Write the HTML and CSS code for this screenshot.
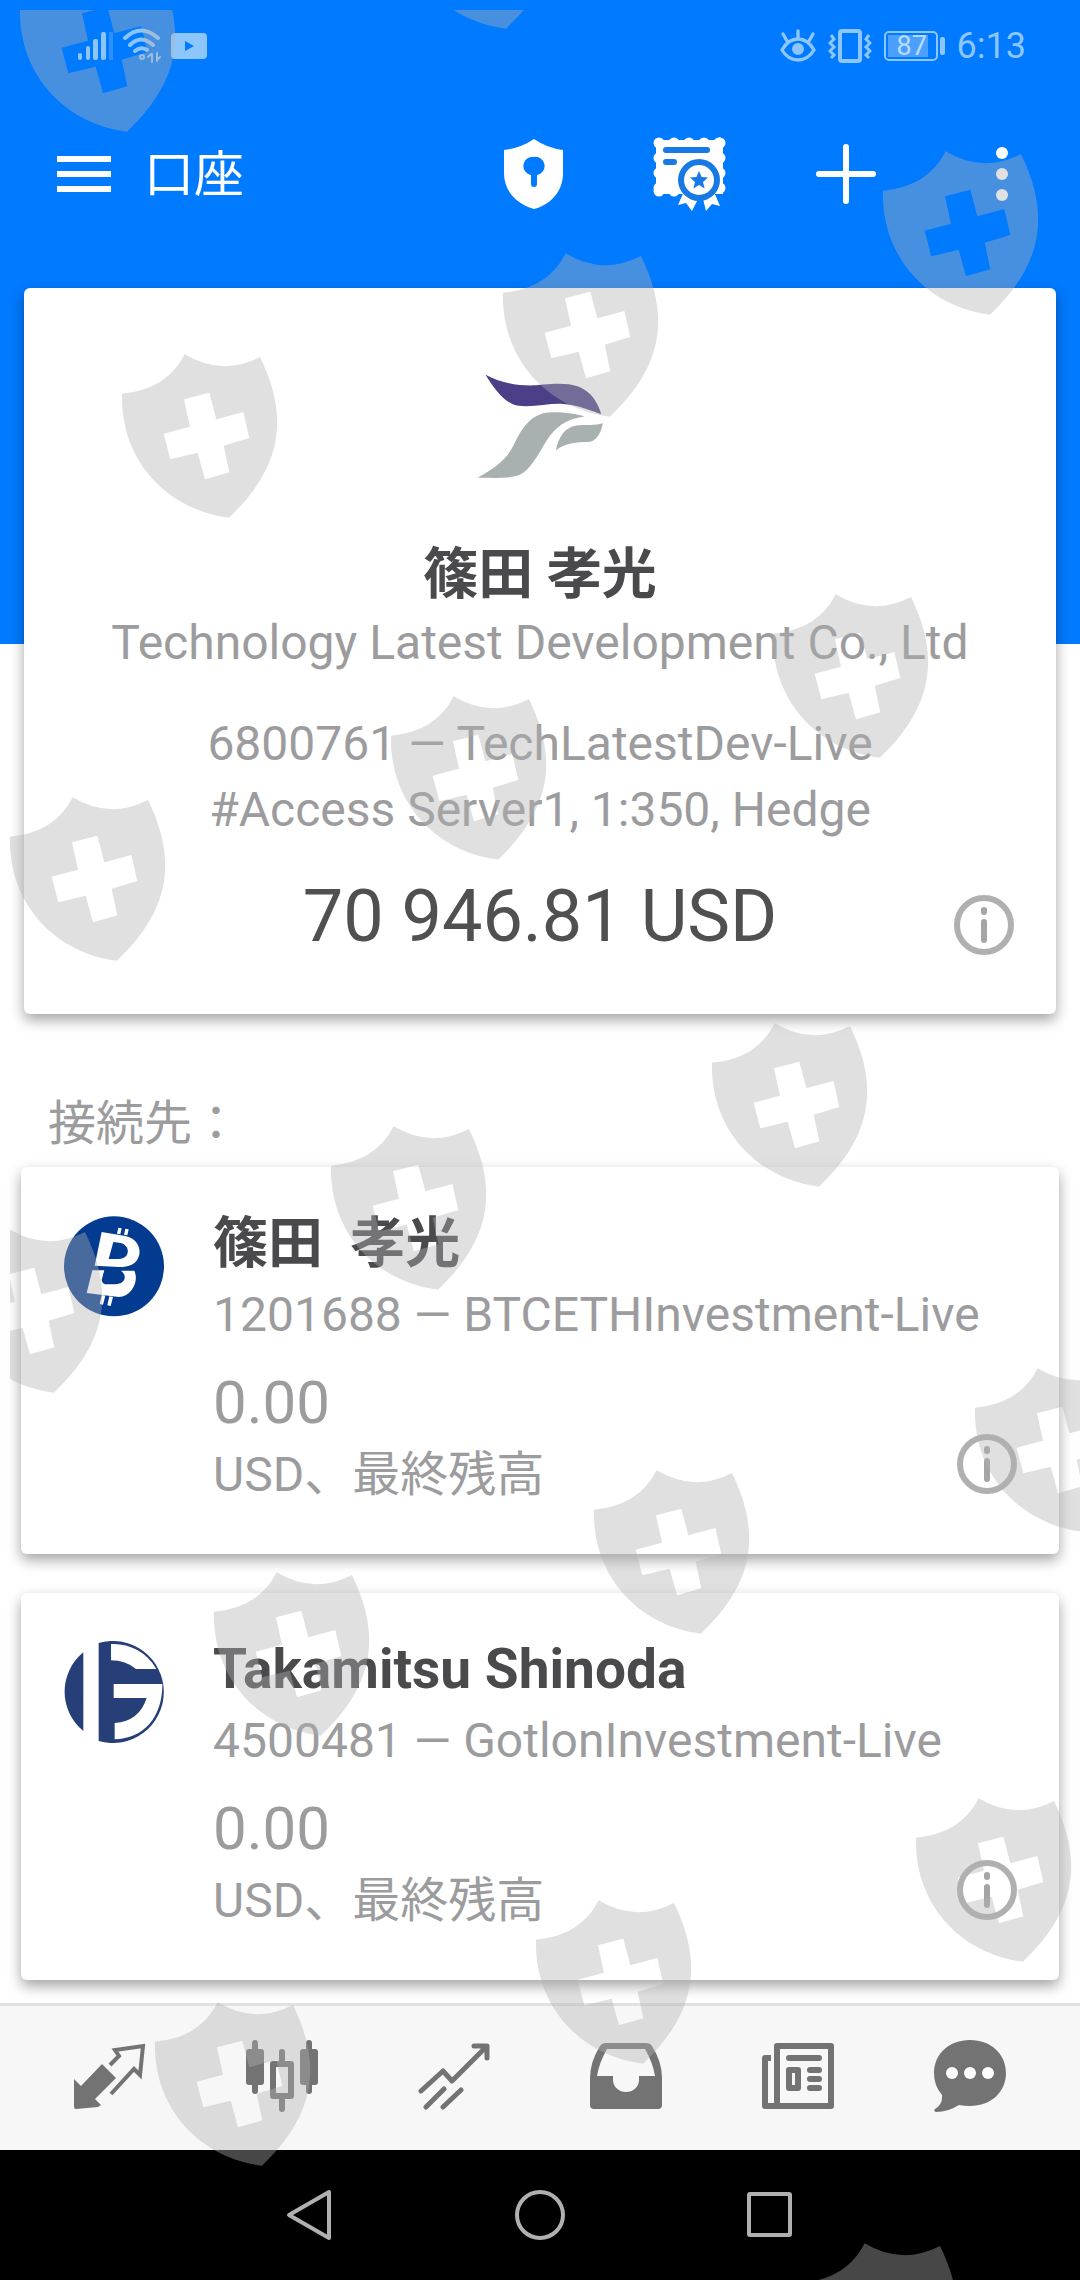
FILE: index.html
```html
<!DOCTYPE html>
<html lang="ja">
<head>
<meta charset="utf-8">
<meta name="viewport" content="width=device-width, initial-scale=1">
<title>口座</title>
<link rel="stylesheet" href="styles.css">
</head>
<body>
<header class="header">
  <div class="status">
    <div class="status-group status-left">
      <svg width="28" height="30" viewBox="0 0 28 30" fill="currentColor"><rect x="0" y="22" width="4" height="7" rx="2"/><rect x="8" y="15" width="4" height="14" rx="2"/><rect x="15" y="8" width="5" height="21" rx="2"/><rect x="23" y="1" width="5" height="28" rx="2"/></svg>
      <span class="no-sim"></span>
      <svg width="40" height="36" viewBox="0 0 40 36" fill="none" stroke="currentColor" stroke-width="4" stroke-linecap="round"><path d="M3 10Q19-5 36 10M8 17Q19 6 31 17M13 23Q19 18 25 22"/><circle cx="20" cy="29" r="1"/><path d="M30 26v8M26 29l3-3M35 25v8M38 29l-2 2" stroke-width="2"/></svg>
      <svg width="36" height="26" viewBox="0 0 36 26"><path fill="currentColor" fill-rule="evenodd" d="M4 0H32Q36 0 36 4V22Q36 26 32 26H4Q0 26 0 22V4Q0 0 4 0ZM14 8V18L23 13Z"/></svg>
    </div>
    <div class="status-group status-right">
      <svg width="36" height="34" viewBox="0 0 36 34" fill="none" stroke="currentColor" stroke-width="3.4" stroke-linecap="round"><path d="M2 21Q8 10 18 10T34 21Q28 31 18 31T2 21ZM18 9V2M7 12L3 5M29 12l4-7"/><circle cx="18" cy="20" r="5" fill="currentColor" stroke-width="2"/></svg>
      <svg width="44" height="34" viewBox="0 0 44 34" fill="none" stroke="currentColor" stroke-width="4"><rect x="12" y="2" width="20" height="30" rx="2"/><path d="M3 6l3 4-4 4 4 4-4 4 4 4-3 3M41 6l-3 4 4 4-4 4 4 4-4 4 3 3" stroke-width="3"/></svg>
      <span class="battery"><span class="battery-level">87</span></span>
      <span class="clock">6:13</span>
    </div>
  </div>
  <div class="toolbar">
    <button class="menu" aria-label="メニュー"><svg width="54" height="38" viewBox="0 0 54 38" fill="#fff"><path d="M0 1h54v6H0zM0 16h54v6H0zM0 31h54v6H0z"/></svg></button>
    <h1 class="title">口座</h1>
    <button class="action" aria-label="セキュリティ"><svg width="60" height="70" viewBox="0 0 60 70"><path fill="#fff" fill-rule="evenodd" d="M30 0Q43 9 59 11V34C59 54 45 66 30 70C15 66 0 54 0 34V11Q17 9 30 0ZM30 18A9 9 0 0 0 27 36V45Q27 48 30 48T33 45V36A9 9 0 0 0 30 18Z"/></svg></button>
    <button class="action" aria-label="証明書"><svg width="74" height="74" viewBox="0 0 74 74"><rect x="3" y="3" width="67" height="54" fill="#fff"/><g fill="none" stroke="#fff" stroke-width="11" stroke-linecap="round" stroke-dasharray="0 15"><path d="M6 6H70M67 6V54M6 6V54M6 54H25"/></g><path fill="#fff" d="M33 50L25 68 33 66 39 74 45 62 50 62 53 74 59 67 67 69 59 50Z"/><circle cx="46" cy="43" r="21" fill="#1679e6"/><circle cx="46" cy="43" r="15" fill="#fff"/><path fill="#1679e6" d="M46 34l2.600 6 6.400.6-5 4.400 1.600 6.500-5.600-3.500-5.600 3.500L42 45l-5-4.400 6.400-.6Z"/><path d="M13 13H54M13 25H21" stroke="#1679e6" stroke-width="6" stroke-linecap="round"/></svg></button>
    <button class="action" aria-label="追加"><svg width="60" height="62" viewBox="0 0 60 62" stroke="#fff" stroke-width="6" stroke-linecap="round"><path d="M30 4V58M3 31H57"/></svg></button>
    <button class="action" aria-label="その他"><svg width="12" height="54" viewBox="0 0 12 54" fill="#fff"><circle cx="6" cy="6" r="6"/><circle cx="6" cy="27" r="6"/><circle cx="6" cy="48" r="6"/></svg></button>
  </div>
</header>

<main class="main">
  <section class="card current">
    <svg class="current-logo" width="128" height="105" viewBox="288 400 384 316"><path fill="#4c3f87" d="M316 402C370 430 420 436 470 434C560 424 600 430 632 462C650 482 660 505 664 521C620 505 590 492 550 490C500 488 460 502 410 495C370 485 340 440 316 402Z"/><path fill="#a8b0b0" d="M292 712C350 680 380 655 400 615C430 555 455 515 520 515C560 515 590 520 614 528C560 535 525 560 500 600C470 650 450 690 415 705C385 716 340 712 292 712ZM528 630C535 590 555 560 590 555C620 552 645 555 669 548C665 575 650 603 625 605C590 605 555 608 528 630Z"/></svg>
    <h2 class="name">篠田 孝光</h2>
    <p class="company">Technology Latest Development Co., Ltd</p>
    <p class="details">6800761 — TechLatestDev-Live<br>#Access Server1, 1:350, Hedge</p>
    <div class="balance-row">
      <p class="balance">70 946.81 USD</p>
      <button class="info" aria-label="口座情報"><svg width="60" height="60" viewBox="0 0 60 60" fill="none" stroke="#b0b0b0" stroke-width="6" stroke-linecap="round"><circle cx="30" cy="30" r="27"/><path d="M30 15v2M30 27v18" stroke="#a5a5a5"/></svg></button>
    </div>
  </section>

  <h2 class="section-label">接続先：</h2>
  <ul class="accounts">
    <li class="card account">
      <svg class="account-logo" width="102" height="102" viewBox="27 28 306 306"><circle cx="180" cy="182" r="150" fill="#023b8f"/><path fill="#fff" fill-rule="evenodd" d="M143 79L214 91C250 98 263 130 254 153C247 175 225 184 195 184L122 180ZM178 109L164 160H194C229 159 230 119 200 112ZM193 66l10 2-4 18-10-2ZM214 69l10 2-4 18-10-2ZM115 194H151L143 222Q144 236 160 236H183C217 235 219 208 201 195H241C256 226 233 272 194 274L98 262ZM143 268l11 2-7 27-10-2ZM166 272l11 2-7 27-10-2Z"/></svg>
      <div class="account-text">
        <h3 class="name">篠田&nbsp; 孝光</h3>
        <p>1201688 — BTCETHInvestment-Live</p>
        <p class="amount">0.00</p>
        <p>USD、最終残高</p>
      </div>
      <button class="info" aria-label="口座情報"><svg width="60" height="60" viewBox="0 0 60 60" fill="none" stroke="#b0b0b0" stroke-width="6" stroke-linecap="round"><circle cx="30" cy="30" r="27"/><path d="M30 15v2M30 27v18" stroke="#a5a5a5"/></svg></button>
    </li>
    <li class="card account">
      <svg class="account-logo" width="102" height="102" viewBox="27 28 306 306"><path fill="#263f78" fill-rule="evenodd" d="M88 62V298A152 152 0 0 1 88 62ZM134 34A153 153 0 1 1 134 328ZM171 37V86Q215 86 246 112H307A146 146 0 0 0 171 37ZM179 157V199H278Q256 269 182 274V323C270 322 326 255 325 157Z"/></svg>
      <div class="account-text">
        <h3 class="name">Takamitsu Shinoda</h3>
        <p>4500481 — GotlonInvestment-Live</p>
        <p class="amount">0.00</p>
        <p>USD、最終残高</p>
      </div>
      <button class="info" aria-label="口座情報"><svg width="60" height="60" viewBox="0 0 60 60" fill="none" stroke="#b0b0b0" stroke-width="6" stroke-linecap="round"><circle cx="30" cy="30" r="27"/><path d="M30 15v2M30 27v18" stroke="#a5a5a5"/></svg></button>
    </li>
  </ul>
</main>

<nav class="tabs">
  <a href="#quotes" aria-label="気配値"><svg width="72" height="72" viewBox="0 0 72 72"><path fill="#737373" d="M28 24L42 38 21 59 27 65 24 67 2 69Q0 69 0 67V39L7 46Z"/><path fill="none" stroke="#737373" stroke-width="4" d="M36 25L45 16 41 10 69 6 66 35 60 29 37 54"/></svg></a>
  <a href="#chart" aria-label="チャート"><svg width="72" height="72" viewBox="0 0 72 72" fill="#737373"><rect x="0" y="9" width="18" height="36" rx="3"/><rect x="6" width="6" height="54" rx="3"/><rect x="54" y="9" width="18" height="36" rx="3"/><rect x="60" width="6" height="54" rx="3"/><path fill="none" stroke="#737373" stroke-width="6" stroke-linecap="round" stroke-linejoin="round" d="M27 24H45V56H27ZM36 12V22M36 58V69"/></svg></a>
  <a href="#trade" aria-label="トレード"><svg width="72" height="72" viewBox="0 0 72 72" fill="none" stroke="#737373" stroke-width="5" stroke-linecap="round" stroke-linejoin="round"><path d="M3 51L25 31 34 41 67 8M56 6H69V18M8 67L26 49M25 67L43 50"/></svg></a>
  <a href="#history" aria-label="履歴"><svg width="72" height="72" viewBox="0 0 72 72"><path fill="#737373" fill-rule="evenodd" d="M16 3H56Q60 3 62 6Q72 22 72 38V65Q72 69 68 69H4Q0 69 0 65V38Q0 22 10 6Q12 3 16 3ZM17 9Q9 23 7 36H23V40A13 12 0 0 0 49 40V36H65Q63 23 55 9Z"/></svg></a>
  <a href="#news" aria-label="ニュース"><svg width="72" height="72" viewBox="0 0 72 72" fill="none" stroke="#737373" stroke-width="6" stroke-linejoin="round"><path d="M15 66V6H69V66H3V18H9"/><path stroke-linecap="round" d="M27 18H57M48 30H57M48 39H57M48 48H57M27 30H36V48H27Z"/></svg></a>
  <a href="#chat" aria-label="チャット"><svg width="72" height="72" viewBox="0 0 72 72"><path fill="#737373" d="M36 0C57 0 72 14 72 33S57 66 36 66Q30 66 25 65Q14 72 2 72Q-1 71 1 69Q9 64 8 55Q0 46 0 33C0 14 15 0 36 0Z"/><g fill="#fff"><circle cx="18" cy="33" r="6"/><circle cx="36" cy="33" r="6"/><circle cx="54" cy="33" r="6"/></g></svg></a>
</nav>

<footer class="system">
  <button aria-label="戻る"><svg width="50" height="54" viewBox="0 0 50 54"><path fill="none" stroke="#b0b0b0" stroke-width="4" stroke-linejoin="round" d="M4 27L44 4V50Z"/></svg></button>
  <button aria-label="ホーム"><svg width="54" height="54" viewBox="0 0 54 54"><circle cx="27" cy="27" r="23" fill="none" stroke="#b0b0b0" stroke-width="4"/></svg></button>
  <button aria-label="アプリ一覧"><svg width="54" height="54" viewBox="0 0 54 54"><rect x="6" y="6" width="41" height="41" rx="1" fill="none" stroke="#b0b0b0" stroke-width="4"/></svg></button>
</footer>

<svg class="shields" aria-hidden="true">
  <defs><path id="shield" fill-rule="evenodd" transform="translate(-22 -24) scale(.3333)" d="M66 191Q200 180 254 73Q365 140 480 81C560 245 560 400 387 563C200 540 60 390 66 191ZM252 208L270 290 191 311 211 388 293 368 315 448 388 427 371 347 448 324 430 246 349 268 328 188Z"/></defs>
  <g transform="translate(-10 -10)">
    <use href="#shield" x="20" y="-32"/><use href="#shield" x="399" y="-135"/><use href="#shield" x="883" y="151"/><use href="#shield" x="503" y="253"/><use href="#shield" x="122" y="354"/><use href="#shield" x="773" y="594"/><use href="#shield" x="391" y="696"/><use href="#shield" x="10" y="797"/><use href="#shield" x="712" y="1023"/><use href="#shield" x="331" y="1126"/><use href="#shield" x="-53" y="1229"/><use href="#shield" x="975" y="1368"/><use href="#shield" x="594" y="1470"/><use href="#shield" x="214" y="1572"/><use href="#shield" x="916" y="1798"/><use href="#shield" x="536" y="1900"/><use href="#shield" x="155" y="2002"/><use href="#shield" x="802" y="2243"/>
  </g>
</svg>
</body>
</html>
```

FILE: styles.css
```css
* {
  box-sizing: border-box;
}

body,
h1,
h2,
h3,
p,
ul {
  margin: 0;
  padding: 0;
}

body {
  position: relative;
  display: flex;
  flex-direction: column;
  min-height: 100vh;
  background: #fff;
  color: #9c9c9e;
  font-family: Roboto, "Noto Sans CJK JP", sans-serif;
  font-size: 48px;
  line-height: 72px;
}

button {
  padding: 0;
  border: 0;
  background: none;
}

svg {
  display: block;
  flex: none;
}

/* Header */
.header {
  min-height: 644px;
  background: #007aff;
}

.status {
  display: flex;
  justify-content: space-between;
  height: 84px;
  padding: 8px 54px 0 78px;
  color: #8cc6fc;
}

.status-group {
  display: flex;
  align-items: center;
}

.no-sim {
  width: 4px;
  height: 28px;
  margin: 0 9px 0 3px;
  background: #2e90fb;
}

.status-left svg:last-child {
  margin-left: 9px;
}

.status-right {
  gap: 12px;
}

.battery {
  display: flex;
  position: relative;
  width: 54px;
  height: 30px;
  margin-right: 7px;
  padding: 2px;
  border: 2px solid #8cc6fc;
  border-radius: 5px;
}

.battery::after {
  content: "";
  position: absolute;
  top: 4px;
  right: -9px;
  width: 5px;
  height: 18px;
  border-radius: 2px;
  background: #8cc6fc;
}

.battery-level {
  flex: 0 0 87%;
  padding-left: 9px;
  background: #4ba0fd;
  color: #b8dcff;
  font-size: 27px;
  line-height: 22px;
}

.clock {
  font-size: 36px;
}

.toolbar {
  display: flex;
  align-items: center;
  height: 180px;
  padding-left: 57px;
}

.title {
  flex: 1;
  margin: 2px 0 0 33px;
  color: #fff;
  font-size: 50px;
  font-weight: 400;
}

.action {
  display: flex;
  justify-content: center;
  width: 156px;
}

/* Cards */
.main {
  flex: 1;
  margin-top: -356px;
}

.card {
  border-radius: 6px;
  background: #fff;
  box-shadow: 0 6px 14px rgba(0, 0, 0, 0.36);
}

.name {
  color: #4a4a4d;
  font-size: 55px;
  font-weight: 700;
}

.current {
  margin: 0 24px;
  padding: 86px 42px 49px;
  text-align: center;
}

.current-logo {
  margin: 0 auto 60px;
}

.current .name {
  padding-top: 2px;
  line-height: 66px;
}

.details {
  margin-top: 32px;
  line-height: 66px;
}

.balance-row {
  display: grid;
  grid-template-columns: 1fr auto 1fr;
  margin-top: 26px;
}

.balance {
  grid-column: 2;
  color: #505050;
  font-size: 72px;
  line-height: 96px;
}

.balance-row .info {
  align-self: end;
  justify-self: end;
  margin-bottom: 10px;
}

.section-label {
  margin: 74px 0 7px;
  padding-left: 48px;
  font-size: 48px;
  font-weight: 400;
}

.accounts {
  display: flex;
  flex-direction: column;
  gap: 39px;
  padding: 0 21px 23px;
  list-style: none;
}

.account {
  display: grid;
  grid-template-columns: auto 1fr;
  column-gap: 48px;
  padding: 40px 42px 43px;
}

.account-logo {
  margin-top: 8px;
}

/* The info button shares the text's cell, in its lower right corner */
.account-text,
.account .info {
  grid-area: 1 / 2;
}

.account .info {
  align-self: end;
  justify-self: end;
  margin-bottom: 17px;
}

.amount {
  margin-top: 16px;
  font-size: 60px;
}

/* Bottom bars */
.tabs {
  display: grid;
  grid-template-columns: repeat(6, 1fr);
  justify-items: center;
  padding: 34px 24px 38px;
  border-top: 3px solid #e2e2e2;
  background: #f7f7f7;
}

.system {
  display: grid;
  grid-template-columns: repeat(3, 230px);
  justify-content: center;
  justify-items: center;
  align-items: center;
  height: 130px;
  background: #000;
}

/* Watermark over the whole screen */
.shields {
  position: absolute;
  top: 10px;
  left: 10px;
  width: calc(100% - 10px);
  height: calc(100% - 10px);
  overflow: hidden;
  fill: #b2b2b2;
  fill-opacity: 0.4;
  pointer-events: none;
}
```
